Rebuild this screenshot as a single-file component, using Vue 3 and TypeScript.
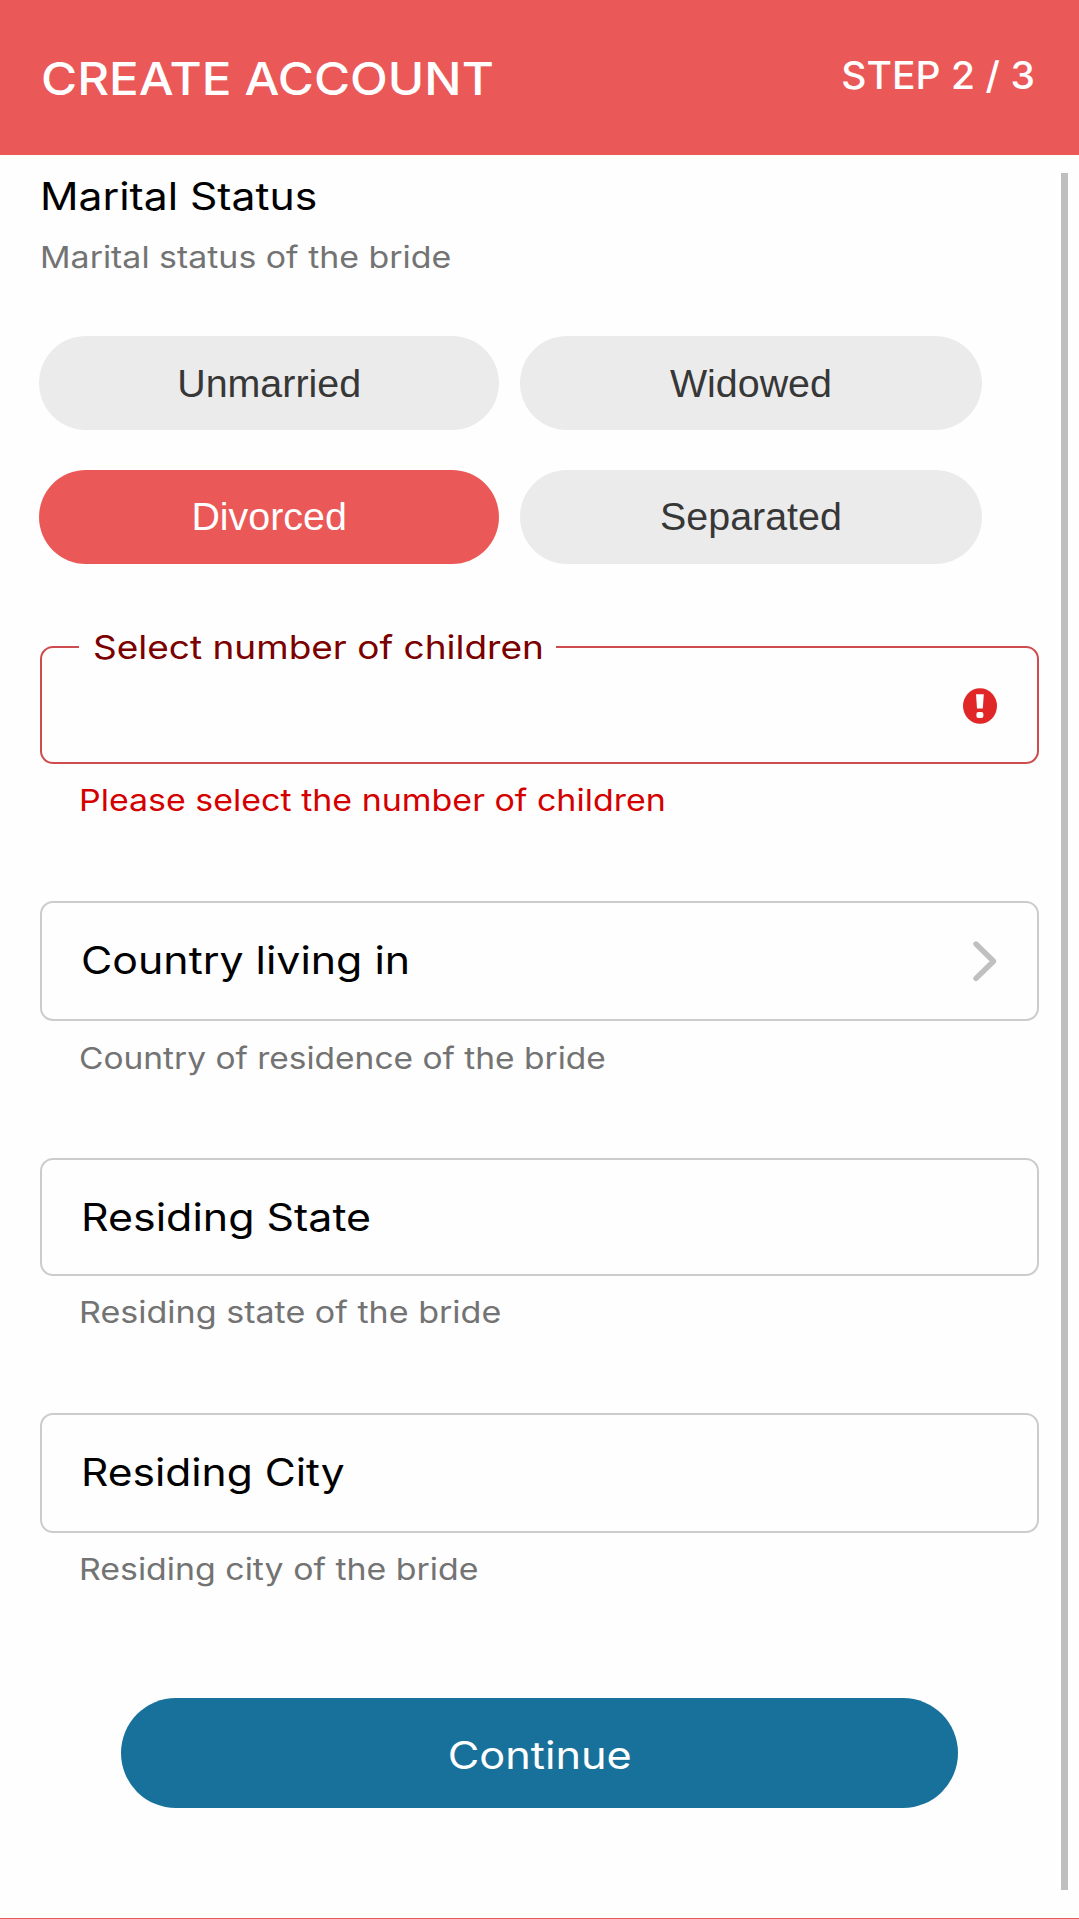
<script setup lang="ts">
import { ref } from 'vue'

interface Label {
  text: string
  size: number
  width: number
  weight?: number
}

interface Field {
  id: string
  label: Label
  hint: Label
  chevron?: boolean
}

const family = 'Inter'
const pen = document.createElement('canvas').getContext('2d')!

// Widens a label horizontally so that its glyphs span the given width.
function fit(label: Label) {
  const weight = label.weight ?? 420
  pen.font = `${weight} 200px ${family}`
  const m = pen.measureText(label.text)
  const ink = ((m.actualBoundingBoxRight + m.actualBoundingBoxLeft) * label.size) / 200
  return {
    fontSize: `${label.size}px`,
    fontWeight: weight,
    transform: `scaleX(${label.width / ink})`,
  }
}

const title: Label = { text: 'CREATE ACCOUNT', size: 45, width: 448, weight: 450 }
const step: Label = { text: 'STEP 2 / 3', size: 37.5, width: 189.5, weight: 480 }
const heading: Label = { text: 'Marital Status', size: 37.5, width: 271.5 }
const subheading: Label = { text: 'Marital status of the bride', size: 30, width: 406.8 }
const childrenLabel: Label = { text: 'Select number of children', size: 32.5, width: 446 }
const childrenError: Label = { text: 'Please select the number of children', size: 30, width: 581.3 }
const submit: Label = { text: 'Continue', size: 37.5, width: 179.6, weight: 400 }

const statuses = ['Unmarried', 'Widowed', 'Divorced', 'Separated']
const selected = ref('Divorced')

const fields: Field[] = [
  {
    id: 'country',
    label: { text: 'Country living in', size: 37.5, width: 323.5 },
    hint: { text: 'Country of residence of the bride', size: 30, width: 523.3 },
    chevron: true,
  },
  {
    id: 'state',
    label: { text: 'Residing State', size: 37.5, width: 284.4 },
    hint: { text: 'Residing state of the bride', size: 30, width: 417.8 },
  },
  {
    id: 'city',
    label: { text: 'Residing City', size: 37.5, width: 259.2 },
    hint: { text: 'Residing city of the bride', size: 30, width: 395 },
  },
]
</script>

<template>
  <div class="page">
    <header class="header">
      <h1 class="title"><span class="fit" :style="fit(title)">{{ title.text }}</span></h1>
      <div class="step"><span class="fit fit-right" :style="fit(step)">{{ step.text }}</span></div>
    </header>

    <main class="form">
      <h2 class="heading"><span class="fit" :style="fit(heading)">{{ heading.text }}</span></h2>
      <p class="subheading"><span class="fit" :style="fit(subheading)">{{ subheading.text }}</span></p>

      <div class="statuses">
        <button
          v-for="s in statuses"
          :key="s"
          type="button"
          class="pill"
          :class="{ active: s === selected }"
          @click="selected = s"
        >{{ s }}</button>
      </div>

      <div class="box children">
        <div class="legend"><span class="fit" :style="fit(childrenLabel)">{{ childrenLabel.text }}</span></div>
        <svg class="alert" width="36" height="38" viewBox="0 0 36 38">
          <ellipse cx="18" cy="19" rx="17" ry="17.8" fill="#e02626" />
          <path d="M14 7.3h7.8l-1 14.2h-5.8z" fill="#fff" />
          <rect x="14.4" y="25" width="7" height="6" rx="2" fill="#fff" />
        </svg>
      </div>
      <p class="hint error"><span class="fit" :style="fit(childrenError)">{{ childrenError.text }}</span></p>

      <template v-for="f in fields" :key="f.id">
        <div class="box" :class="f.id">
          <span class="fit" :style="fit(f.label)">{{ f.label.text }}</span>
          <svg v-if="f.chevron" class="chevron" width="26" height="44" viewBox="0 0 26 44">
            <path d="M4 5 21.5 22.2 4 39.4" fill="none" stroke="#c0c0c0" stroke-width="5.4" stroke-linecap="round" stroke-linejoin="round" />
          </svg>
        </div>
        <p class="hint" :class="f.id + '-hint'"><span class="fit" :style="fit(f.hint)">{{ f.hint.text }}</span></p>
      </template>

      <button type="button" class="submit"><span class="fit fit-center" :style="fit(submit)">{{ submit.text }}</span></button>
    </main>
    <div class="scrollbar"></div>
    <div class="edge"></div>
  </div>
</template>

<style>
body {
  margin: 0;
  background: #fefefe;
}
</style>

<style scoped>
.page {
  position: relative;
  box-sizing: border-box;
  width: 1079px;
  height: 1919px;
  overflow: hidden;
  background: #fefefe;
  font-family: Inter, sans-serif;
  color: #000;
}
h1, h2, p {
  margin: 0;
  font-weight: 400;
}
.fit {
  display: inline-block;
  transform-origin: left center;
  white-space: nowrap;
  line-height: inherit;
  vertical-align: top;
}
.fit-right { transform-origin: right center; }
.fit-center { transform-origin: center; }
.header {
  display: flex;
  justify-content: space-between;
  align-items: flex-start;
  box-sizing: border-box;
  height: 155px;
  padding: 0 44.5px 0 41px;
  background: #eb5858;
  color: #fff;
}
.title {
  margin-top: 48.5px;
  line-height: 60px;
}
.step {
  margin-top: 51.5px;
  line-height: 48px;
}
.form {
  padding: 18.4px 0 0 39px;
}
.heading {
  padding-left: 0.8px;
  line-height: 48px;
}
.subheading {
  margin-top: 15.6px;
  padding-left: 0.8px;
  line-height: 40px;
  color: #737373;
}
.statuses {
  display: grid;
  grid-template-columns: 459.5px 461.5px;
  grid-auto-rows: 94.4px;
  gap: 39.6px 21.3px;
  margin-top: 59px;
  padding-left: 0.4px;
}
.pill {
  padding: 0;
  border: 0;
  border-radius: 48px;
  background: #ebebeb;
  color: #373737;
  font: 39.4px "Liberation Sans", Arial, sans-serif;
}
.pill.active {
  background: #eb5858;
  color: #fff;
}
.pill:nth-child(n + 3) { padding-bottom: 1px; }
.box {
  position: relative;
  display: flex;
  align-items: center;
  justify-content: space-between;
  box-sizing: border-box;
  width: 999px;
  height: 120px;
  margin-left: 1px;
  padding: 1px 39.5px 0 39px;
  border: 2.4px solid #ccc;
  border-radius: 13px;
  line-height: 48px;
}
.children {
  justify-content: flex-end;
  height: 118px;
  margin-top: 81.6px;
  padding-top: 2px;
  border-color: #cf4c4e;
}
.legend {
  position: absolute;
  left: 37px;
  top: -20px;
  width: 463px;
  padding-left: 13.5px;
  background: #fefefe;
  line-height: 40px;
  color: #7b0000;
}
.hint {
  height: 40px;
  padding-left: 39.5px;
  line-height: 40px;
  color: #737373;
}
.error {
  margin: 16px 0 81px;
  color: #d40000;
}
.country-hint { margin: 16.6px 0 80.4px; }
.state {
  height: 118px;
  padding-top: 2px;
}
.state-hint { margin: 16px 0 81px; }
.city-hint { margin-top: 16px; }
.submit {
  display: block;
  width: 837.5px;
  height: 110.6px;
  margin: 108.8px 0 0 81.7px;
  padding: 6px 0 0;
  border: 0;
  border-radius: 56px;
  background: #18719b;
  color: #fff;
  font-family: inherit;
  line-height: 48px;
}
.scrollbar {
  position: absolute;
  top: 173px;
  left: 1060.5px;
  width: 7.5px;
  height: 1716.5px;
  background: #bfbfbf;
}
.edge {
  position: absolute;
  left: 0;
  right: 0;
  bottom: 0;
  height: 1px;
  background: #eb5858;
}
</style>
